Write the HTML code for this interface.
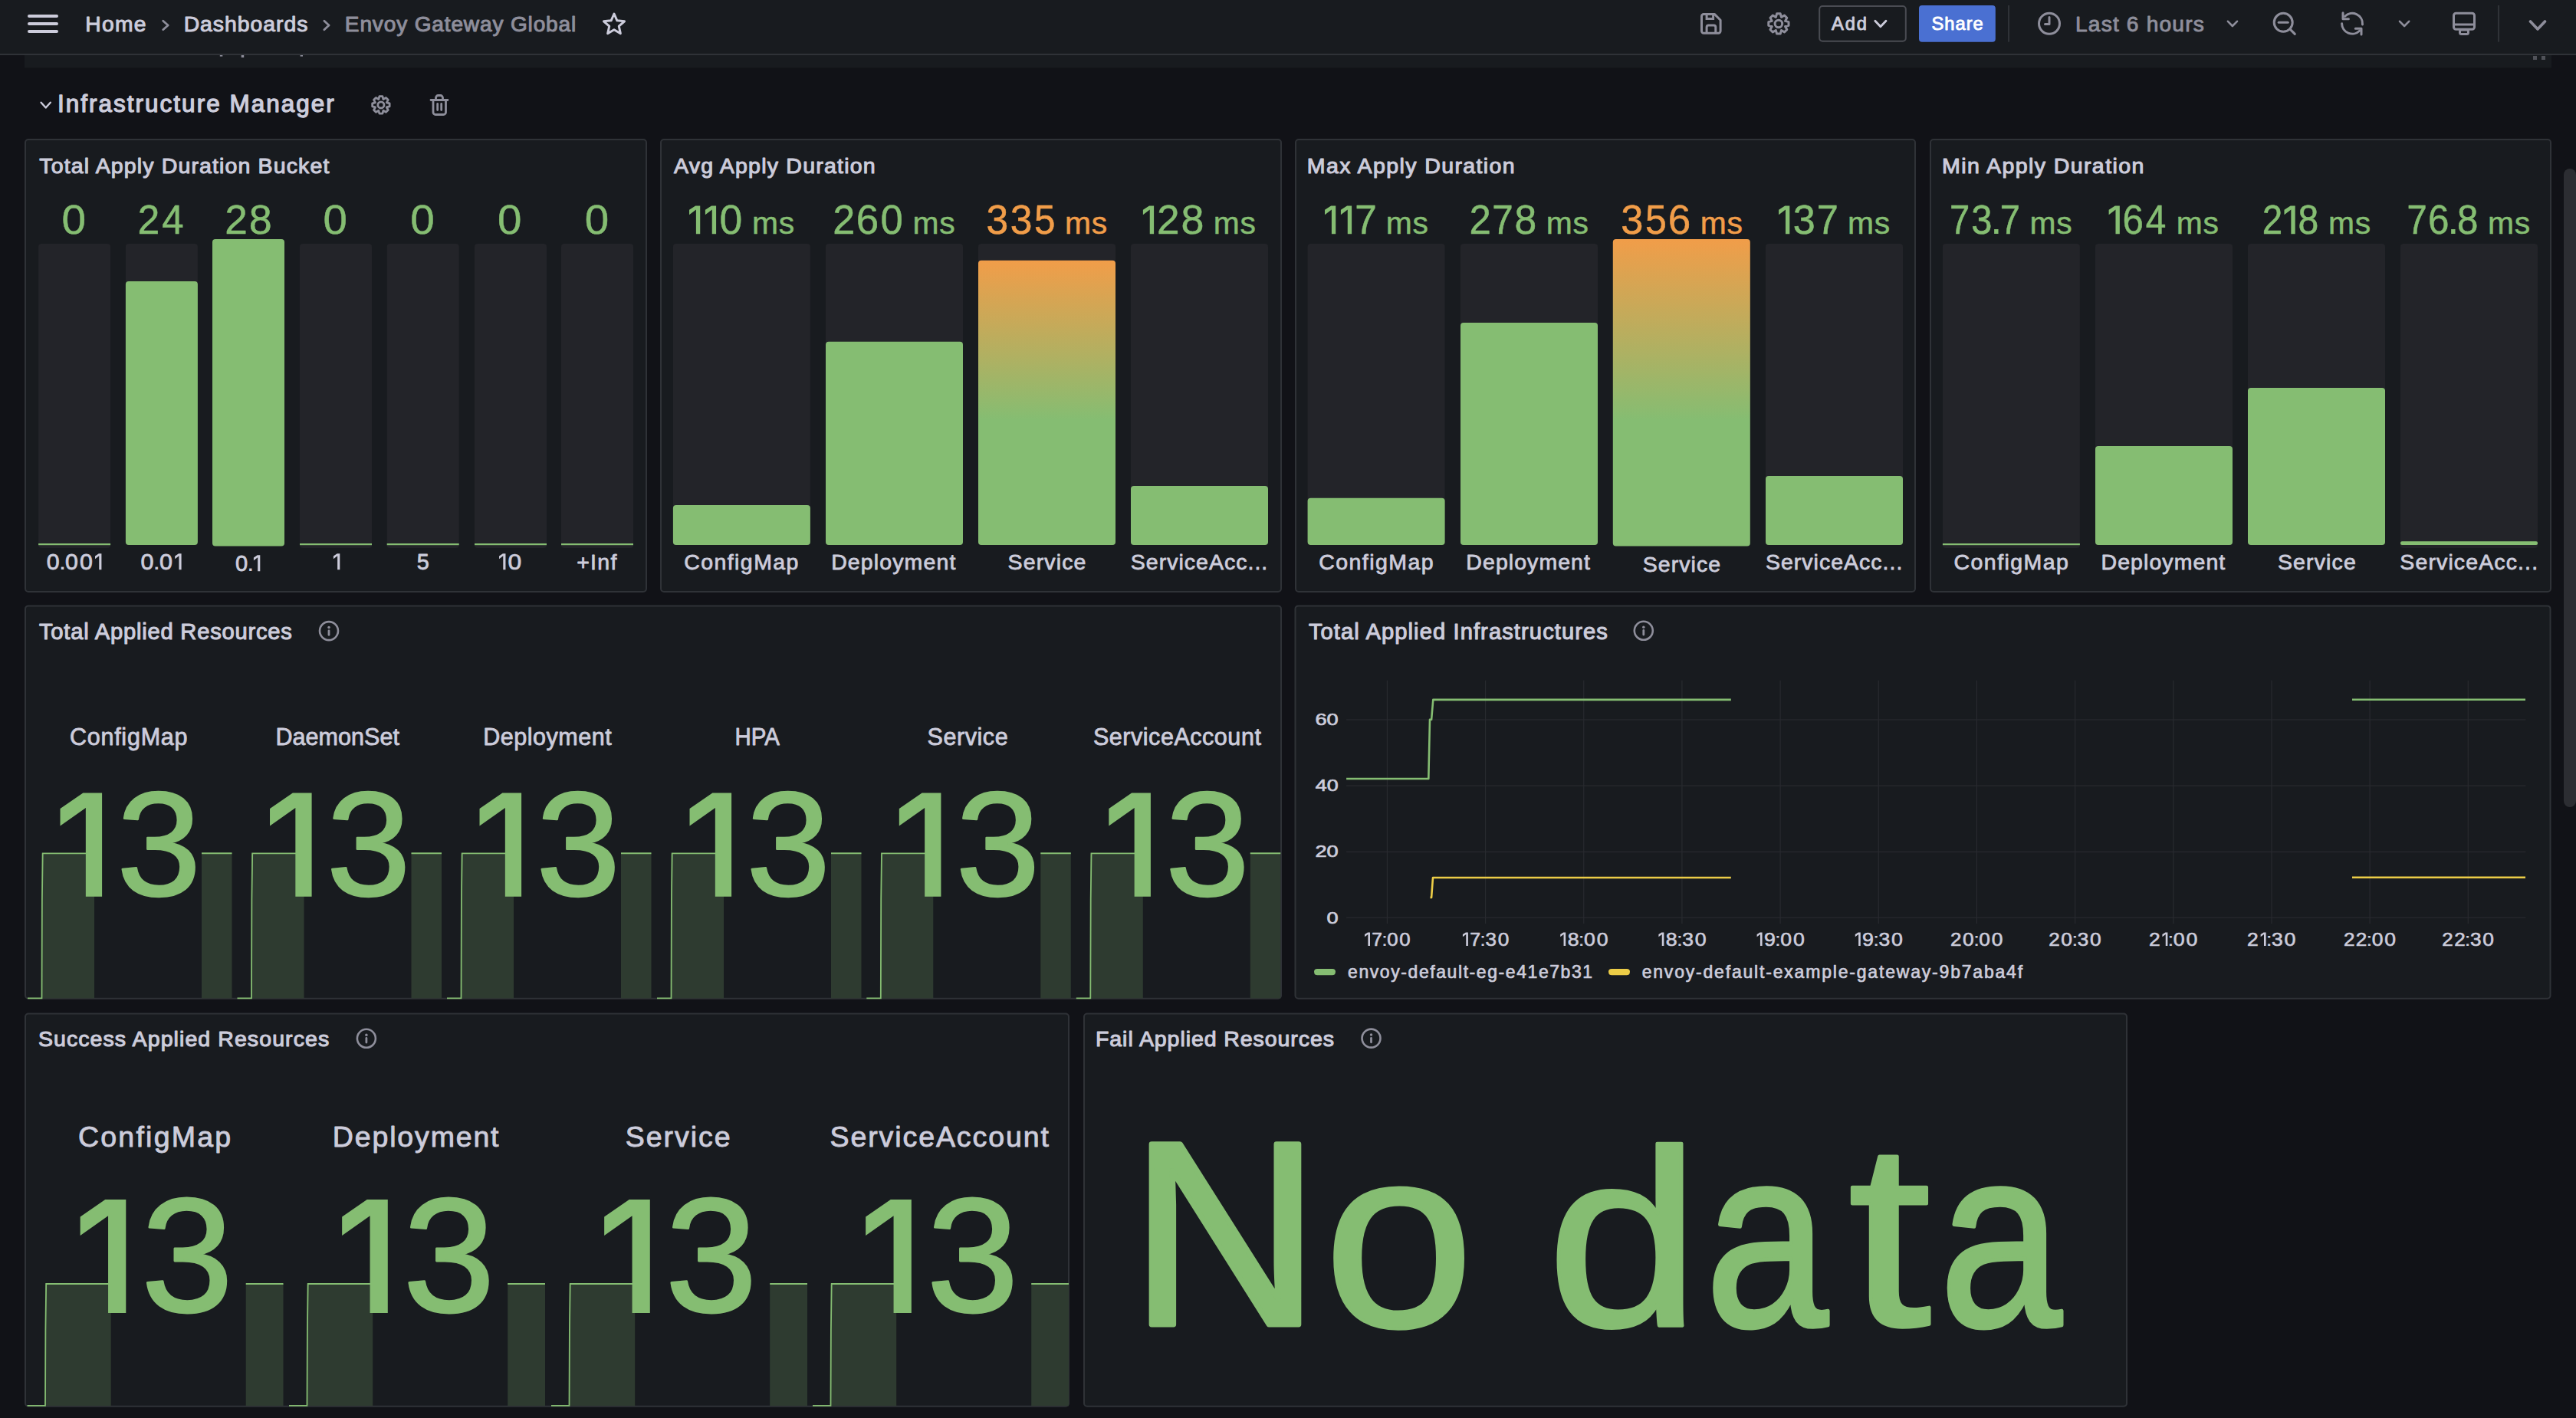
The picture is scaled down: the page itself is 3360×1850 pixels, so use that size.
<!DOCTYPE html>
<html><head><meta charset="utf-8"><title>Envoy Gateway Global - Grafana</title>
<style>html,body{margin:0;padding:0;background:#111217;overflow:hidden;width:3360px;height:1850px}svg{display:block}text{font-family:"Liberation Sans", sans-serif;white-space:pre}</style>
</head><body>
<svg width="3360" height="1850" viewBox="0 0 3360 1850">
<rect x="0" y="0" width="3360" height="1850" fill="#111217"/>
<rect x="32.00" y="60.00" width="3296.00" height="28.50" rx="0" fill="#181b1f"/>
<rect x="286.80" y="72.00" width="3.50" height="1.60" rx="0" fill="#8e8e9b"/>
<rect x="314.70" y="72.00" width="3.50" height="3.00" rx="0" fill="#8e8e9b"/>
<rect x="391.60" y="72.00" width="3.40" height="1.60" rx="0" fill="#8e8e9b"/>
<rect x="3304.00" y="73.00" width="5.00" height="5.00" rx="0" fill="#505259"/>
<rect x="3315.00" y="73.00" width="5.00" height="5.00" rx="0" fill="#505259"/>
<rect x="0.00" y="0.00" width="3360.00" height="70.00" rx="0" fill="#181b1f"/>
<rect x="0.00" y="70.00" width="3360.00" height="2.00" rx="0" fill="#2f3237"/>
<rect x="36.00" y="19.00" width="40.00" height="4.00" rx="2" fill="#ccccdb"/>
<rect x="36.00" y="29.00" width="40.00" height="4.00" rx="2" fill="#ccccdb"/>
<rect x="36.00" y="39.00" width="40.00" height="4.00" rx="2" fill="#ccccdb"/>
<text x="111.25" y="41.20" font-size="28.22" letter-spacing="1.333" fill="#ccccdb" stroke="#ccccdb" stroke-width="1.0" stroke-linejoin="round">Home</text>
<polyline points="212.7,27.2 219.2,33.0 212.7,38.7" fill="none" stroke="#8e8e9b" stroke-width="2.8" stroke-linecap="round" stroke-linejoin="round"/>
<text x="239.65" y="41.30" font-size="28.36" letter-spacing="0.972" fill="#ccccdb" stroke="#ccccdb" stroke-width="1.0" stroke-linejoin="round">Dashboards</text>
<polyline points="422.9,27.2 429.1,33.0 422.9,38.7" fill="none" stroke="#8e8e9b" stroke-width="2.8" stroke-linecap="round" stroke-linejoin="round"/>
<text x="449.85" y="41.20" font-size="28.07" letter-spacing="0.837" fill="#8e8e9b" stroke="#8e8e9b" stroke-width="1.0" stroke-linejoin="round">Envoy Gateway Global</text>
<polygon points="801.00,18.00 804.88,26.86 814.51,27.81 807.28,34.24 809.35,43.69 801.00,38.80 792.65,43.69 794.72,34.24 787.49,27.81 797.12,26.86" fill="none" stroke="#ccccdb" stroke-width="3" stroke-linejoin="round"/>
<path d="M2221.5,18.6 H2236.5 L2244.1,26.2 V40.6 a2.7,2.7 0 0 1 -2.7,2.7 H2222.2 a2.7,2.7 0 0 1 -2.7,-2.7 V21.3 a2.7,2.7 0 0 1 2.7,-2.7 Z" fill="none" stroke="#8e8e9b" stroke-width="3" stroke-linejoin="round"/>
<path d="M2226.1,18.6 V24.6 H2234.6 V18.6" fill="none" stroke="#8e8e9b" stroke-width="3"/>
<path d="M2226.1,43.3 V35.6 a2.5,2.5 0 0 1 2.5,-2.5 H2235.3 a2.5,2.5 0 0 1 2.5,2.5 V43.3" fill="none" stroke="#8e8e9b" stroke-width="3"/>
<polygon points="2317.59,17.85 2322.21,17.85 2323.46,22.35 2327.53,20.06 2330.79,23.32 2328.50,27.39 2333.00,28.64 2333.00,33.26 2328.50,34.51 2330.79,38.58 2327.53,41.84 2323.46,39.55 2322.21,44.05 2317.59,44.05 2316.34,39.55 2312.27,41.84 2309.01,38.58 2311.30,34.51 2306.80,33.26 2306.80,28.64 2311.30,27.39 2309.01,23.32 2312.27,20.06 2316.34,22.35" fill="none" stroke="#8e8e9b" stroke-width="3" stroke-linejoin="round"/>
<circle cx="2319.9" cy="30.95" r="4.79" fill="none" stroke="#8e8e9b" stroke-width="3"/>
<rect x="2373.2" y="8" width="112.6" height="45.7" rx="4" fill="none" stroke="#4a4c53" stroke-width="2"/>
<text x="2388.95" y="39.10" font-size="23.69" letter-spacing="1.925" fill="#ccccdb" stroke="#ccccdb" stroke-width="0.9" stroke-linejoin="round">Add</text>
<polyline points="2445.8,27.2 2452.9,34.8 2460.0,27.2" fill="none" stroke="#ccccdb" stroke-width="2.8" stroke-linecap="round" stroke-linejoin="round"/>
<rect x="2503.00" y="7.00" width="99.80" height="47.70" rx="4" fill="#4a70d2"/>
<text x="2519.45" y="39.10" font-size="23.69" letter-spacing="1.025" fill="#ffffff" stroke="#ffffff" stroke-width="0.9" stroke-linejoin="round">Share</text>
<rect x="2619.00" y="7.00" width="2.00" height="47.70" rx="0" fill="#2f3237"/>
<circle cx="2673" cy="30.85" r="13.5" fill="none" stroke="#8e8e9b" stroke-width="3"/>
<polyline points="2673,22.5 2673,31.5 2667.5,31.5" fill="none" stroke="#8e8e9b" stroke-width="3" stroke-linecap="round" stroke-linejoin="round"/>
<text x="2707.00" y="41.30" font-size="28.20" letter-spacing="1.150" fill="#8e8e9b" stroke="#8e8e9b" stroke-width="0.9" stroke-linejoin="round">Last 6 hours</text>
<polyline points="2905.9,27.8 2911.9,34.0 2918.0,27.8" fill="none" stroke="#8e8e9b" stroke-width="2.6" stroke-linecap="round" stroke-linejoin="round"/>
<circle cx="2978.2" cy="29.3" r="12" fill="none" stroke="#8e8e9b" stroke-width="3"/>
<line x1="2986.8" y1="37.9" x2="2993.3" y2="44.4" stroke="#8e8e9b" stroke-width="3" stroke-linecap="round"/>
<line x1="2972.2" y1="29.3" x2="2984.2" y2="29.3" stroke="#8e8e9b" stroke-width="3" stroke-linecap="round"/>
<path d="M3058.6,21.2 A13.5,13.5 0 0 1 3081.5,31.9" fill="none" stroke="#8e8e9b" stroke-width="3" stroke-linecap="round"/>
<path d="M3054.6,30.7 A13.5,13.5 0 0 0 3077.6,40.2" fill="none" stroke="#8e8e9b" stroke-width="3" stroke-linecap="round"/>
<polyline points="3056,16.8 3056,24.8 3063.4,24.8" fill="none" stroke="#8e8e9b" stroke-width="3" stroke-linecap="round" stroke-linejoin="round"/>
<polyline points="3072.3,37.2 3080,37.2 3080,45" fill="none" stroke="#8e8e9b" stroke-width="3" stroke-linecap="round" stroke-linejoin="round"/>
<polyline points="3130.0,27.8 3136.1,34.0 3142.2,27.8" fill="none" stroke="#8e8e9b" stroke-width="2.6" stroke-linecap="round" stroke-linejoin="round"/>
<rect x="3200.5" y="17.3" width="27" height="21" rx="3" fill="none" stroke="#8e8e9b" stroke-width="3"/>
<line x1="3200.5" y1="32" x2="3227.5" y2="32" stroke="#8e8e9b" stroke-width="3"/>
<rect x="3208.5" y="39" width="11" height="5.5" rx="2" fill="none" stroke="#8e8e9b" stroke-width="3"/>
<rect x="3258.00" y="7.00" width="2.00" height="47.70" rx="0" fill="#2f3237"/>
<polyline points="3300.5,28.0 3310.0,38.0 3319.5,28.0" fill="none" stroke="#8e8e9b" stroke-width="3.6" stroke-linecap="round" stroke-linejoin="round"/>
<polyline points="53.6,133.7 59.7,140.5 65.8,133.7" fill="none" stroke="#ccccdb" stroke-width="2.4" stroke-linecap="round" stroke-linejoin="round"/>
<text x="74.95" y="146.20" font-size="31.46" letter-spacing="2.031" fill="#ccccdb" stroke="#ccccdb" stroke-width="1.3" stroke-linejoin="round">Infrastructure Manager</text>
<polygon points="494.92,125.67 498.88,125.67 499.95,129.53 503.44,127.56 506.24,130.36 504.27,133.85 508.13,134.92 508.13,138.88 504.27,139.95 506.24,143.44 503.44,146.24 499.95,144.27 498.88,148.13 494.92,148.13 493.85,144.27 490.36,146.24 487.56,143.44 489.53,139.95 485.67,138.88 485.67,134.92 489.53,133.85 487.56,130.36 490.36,127.56 493.85,129.53" fill="none" stroke="#8e8e9b" stroke-width="2.8" stroke-linejoin="round"/>
<circle cx="496.9" cy="136.9" r="4.10" fill="none" stroke="#8e8e9b" stroke-width="2.8"/>
<path d="M562,130.5 H584 M568.5,130.5 V127.5 a3,3 0 0 1 3,-3 H574.5 a3,3 0 0 1 3,3 V130.5 M565,130.5 V146.5 a3,3 0 0 0 3,3 H578.5 a3,3 0 0 0 3,-3 V130.5 M570.7,135.5 V143.5 M575.7,135.5 V143.5" fill="none" stroke="#8e8e9b" stroke-width="2.8" stroke-linecap="round" stroke-linejoin="round"/>
<rect x="3344.00" y="220.00" width="16.00" height="833.00" rx="8" fill="#2c2d32"/>
<rect x="33.00" y="182.00" width="810.00" height="590.00" rx="4" fill="#181b1f" stroke="#2f3237" stroke-width="2"/>
<rect x="862.00" y="182.00" width="809.00" height="590.00" rx="4" fill="#181b1f" stroke="#2f3237" stroke-width="2"/>
<rect x="1690.00" y="182.00" width="808.00" height="590.00" rx="4" fill="#181b1f" stroke="#2f3237" stroke-width="2"/>
<rect x="2518.00" y="182.00" width="809.00" height="590.00" rx="4" fill="#181b1f" stroke="#2f3237" stroke-width="2"/>
<text x="51.25" y="226.20" font-size="28.52" letter-spacing="1.133" fill="#ccccdb" stroke="#ccccdb" stroke-width="1.1" stroke-linejoin="round">Total Apply Duration Bucket</text>
<text x="878.95" y="226.20" font-size="28.52" letter-spacing="1.218" fill="#ccccdb" stroke="#ccccdb" stroke-width="1.1" stroke-linejoin="round">Avg Apply Duration</text>
<text x="1704.80" y="226.20" font-size="28.52" letter-spacing="1.388" fill="#ccccdb" stroke="#ccccdb" stroke-width="1.1" stroke-linejoin="round">Max Apply Duration</text>
<text x="2533.10" y="226.20" font-size="28.52" letter-spacing="1.406" fill="#ccccdb" stroke="#ccccdb" stroke-width="1.1" stroke-linejoin="round">Min Apply Duration</text>
<defs><linearGradient id="g1" gradientUnits="userSpaceOnUse" x1="0" y1="340" x2="0" y2="711"><stop offset="0" stop-color="#f19d49"/><stop offset="0.56" stop-color="#85bd72"/><stop offset="1" stop-color="#85bd72"/></linearGradient><linearGradient id="g2" gradientUnits="userSpaceOnUse" x1="0" y1="312" x2="0" y2="712.6"><stop offset="0" stop-color="#f19d49"/><stop offset="0.59" stop-color="#85bd72"/><stop offset="1" stop-color="#85bd72"/></linearGradient></defs>
<rect x="50.10" y="318.00" width="94.00" height="397.00" rx="4" fill="#232429"/>
<rect x="50.10" y="709.00" width="94.00" height="2.20" rx="0" fill="#85bd72"/>
<text transform="translate(80.58,305.16) scale(0.5675,0.5282)" x="0" y="0" font-size="100.0" fill="#85bd72" stroke="#85bd72" stroke-width="0.881" stroke-linejoin="round">0</text>
<text transform="translate(60.69,742.91) scale(0.3031,0.2941)" x="0" y="0" font-size="100.0" fill="#ccccdb" stroke="#ccccdb" stroke-width="2.640" stroke-linejoin="round">0</text>
<text transform="translate(76.38,743.30) scale(0.3580,0.3126)" x="0" y="0" font-size="100.0" fill="#ccccdb">.</text>
<text transform="translate(85.12,742.91) scale(0.3031,0.2941)" x="0" y="0" font-size="100.0" fill="#ccccdb" stroke="#ccccdb" stroke-width="2.640" stroke-linejoin="round">0</text>
<text transform="translate(104.10,742.91) scale(0.3031,0.2941)" x="0" y="0" font-size="100.0" fill="#ccccdb" stroke="#ccccdb" stroke-width="2.640" stroke-linejoin="round">0</text>
<polygon points="128.83,722.30 132.40,722.30 132.40,743.30 129.25,743.30 129.25,725.34 124.00,729.23 124.00,725.45" fill="#ccccdb"/>
<rect x="163.90" y="318.00" width="94.00" height="393.00" rx="4" fill="#232429"/>
<rect x="163.90" y="366.90" width="94.00" height="344.10" rx="4" fill="#85bd72"/>
<text transform="translate(179.56,305.15) scale(0.5178,0.5281)" x="0" y="0" font-size="100.0" fill="#85bd72" stroke="#85bd72" stroke-width="0.966" stroke-linejoin="round">2</text>
<text transform="translate(211.26,305.15) scale(0.5098,0.5280)" x="0" y="0" font-size="100.0" fill="#85bd72" stroke="#85bd72" stroke-width="0.981" stroke-linejoin="round">4</text>
<text transform="translate(183.48,742.91) scale(0.3054,0.2941)" x="0" y="0" font-size="100.0" fill="#ccccdb" stroke="#ccccdb" stroke-width="2.620" stroke-linejoin="round">0</text>
<text transform="translate(199.29,743.30) scale(0.3606,0.3126)" x="0" y="0" font-size="100.0" fill="#ccccdb">.</text>
<text transform="translate(208.09,742.91) scale(0.3054,0.2941)" x="0" y="0" font-size="100.0" fill="#ccccdb" stroke="#ccccdb" stroke-width="2.620" stroke-linejoin="round">0</text>
<polygon points="233.03,722.30 236.60,722.30 236.60,743.30 233.45,743.30 233.45,725.34 228.20,729.23 228.20,725.45" fill="#ccccdb"/>
<rect x="277.00" y="312.00" width="94.00" height="400.60" rx="4" fill="#85bd72"/>
<text transform="translate(293.29,305.15) scale(0.5320,0.5281)" x="0" y="0" font-size="100.0" fill="#85bd72" stroke="#85bd72" stroke-width="0.940" stroke-linejoin="round">2</text>
<text transform="translate(324.73,305.16) scale(0.5389,0.5282)" x="0" y="0" font-size="100.0" fill="#85bd72" stroke="#85bd72" stroke-width="0.928" stroke-linejoin="round">8</text>
<text transform="translate(306.94,744.91) scale(0.2900,0.2941)" x="0" y="0" font-size="100.0" fill="#ccccdb" stroke="#ccccdb" stroke-width="2.758" stroke-linejoin="round">0</text>
<text transform="translate(321.98,745.30) scale(0.3434,0.3126)" x="0" y="0" font-size="100.0" fill="#ccccdb">.</text>
<polygon points="335.73,724.30 339.30,724.30 339.30,745.30 336.15,745.30 336.15,727.34 330.90,731.23 330.90,727.45" fill="#ccccdb"/>
<rect x="391.00" y="318.00" width="94.00" height="397.00" rx="4" fill="#232429"/>
<rect x="391.00" y="709.00" width="94.00" height="2.20" rx="0" fill="#85bd72"/>
<text transform="translate(421.49,305.16) scale(0.5654,0.5282)" x="0" y="0" font-size="100.0" fill="#85bd72" stroke="#85bd72" stroke-width="0.884" stroke-linejoin="round">0</text>
<polygon points="439.73,722.30 443.30,722.30 443.30,743.30 440.15,743.30 440.15,725.34 434.90,729.23 434.90,725.45" fill="#ccccdb"/>
<rect x="504.70" y="318.00" width="94.00" height="397.00" rx="4" fill="#232429"/>
<rect x="504.70" y="709.00" width="94.00" height="2.20" rx="0" fill="#85bd72"/>
<text transform="translate(535.18,305.16) scale(0.5675,0.5282)" x="0" y="0" font-size="100.0" fill="#85bd72" stroke="#85bd72" stroke-width="0.881" stroke-linejoin="round">0</text>
<text transform="translate(543.65,742.91) scale(0.2884,0.2940)" x="0" y="0" font-size="100.0" fill="#ccccdb" stroke="#ccccdb" stroke-width="2.774" stroke-linejoin="round">5</text>
<rect x="619.00" y="318.00" width="94.00" height="397.00" rx="4" fill="#232429"/>
<rect x="619.00" y="709.00" width="94.00" height="2.20" rx="0" fill="#85bd72"/>
<text transform="translate(648.99,305.16) scale(0.5654,0.5282)" x="0" y="0" font-size="100.0" fill="#85bd72" stroke="#85bd72" stroke-width="0.884" stroke-linejoin="round">0</text>
<polygon points="655.88,722.30 659.45,722.30 659.45,743.30 656.30,743.30 656.30,725.34 651.05,729.23 651.05,725.45" fill="#ccccdb"/>
<text transform="translate(662.47,742.91) scale(0.3195,0.2941)" x="0" y="0" font-size="100.0" fill="#ccccdb" stroke="#ccccdb" stroke-width="2.504" stroke-linejoin="round">0</text>
<rect x="732.00" y="318.00" width="94.00" height="397.00" rx="4" fill="#232429"/>
<rect x="732.00" y="709.00" width="94.00" height="2.20" rx="0" fill="#85bd72"/>
<text transform="translate(762.79,305.16) scale(0.5654,0.5282)" x="0" y="0" font-size="100.0" fill="#85bd72" stroke="#85bd72" stroke-width="0.884" stroke-linejoin="round">0</text>
<text x="752.15" y="743.30" font-size="28.48" letter-spacing="1.317" fill="#ccccdb" stroke="#ccccdb" stroke-width="0.8" stroke-linejoin="round">+Inf</text>
<rect x="877.90" y="318.00" width="179.00" height="393.00" rx="4" fill="#232429"/>
<rect x="877.90" y="659.00" width="179.00" height="52.00" rx="4" fill="#85bd72"/>
<rect x="1077.00" y="318.00" width="179.00" height="393.00" rx="4" fill="#232429"/>
<rect x="1077.00" y="445.80" width="179.00" height="265.20" rx="4" fill="#85bd72"/>
<rect x="1276.00" y="318.00" width="179.00" height="393.00" rx="4" fill="#232429"/>
<rect x="1276.00" y="339.70" width="179.00" height="371.30" rx="4" fill="url(#g1)"/>
<rect x="1475.00" y="318.00" width="179.00" height="393.00" rx="4" fill="#232429"/>
<rect x="1475.00" y="634.00" width="179.00" height="77.00" rx="4" fill="#85bd72"/>
<polygon points="907.16,268.40 913.23,268.40 913.23,305.20 907.89,305.20 907.89,273.55 899.02,280.18 899.02,273.66" fill="#85bd72"/>
<polygon points="928.02,268.40 934.09,268.40 934.09,305.20 928.75,305.20 928.75,273.55 919.89,280.18 919.89,273.66" fill="#85bd72"/>
<text transform="translate(938.53,304.96) scale(0.5356,0.5282)" x="0" y="0" font-size="100.0" fill="#85bd72" stroke="#85bd72" stroke-width="0.933" stroke-linejoin="round">0</text>
<text x="981.00" y="305.20" font-size="40.85" letter-spacing="0.750" fill="#85bd72" stroke="#85bd72" stroke-width="0.5" stroke-linejoin="round">ms</text>
<text transform="translate(1086.34,304.95) scale(0.5211,0.5281)" x="0" y="0" font-size="100.0" fill="#85bd72" stroke="#85bd72" stroke-width="0.960" stroke-linejoin="round">2</text>
<text transform="translate(1116.75,304.96) scale(0.5285,0.5282)" x="0" y="0" font-size="100.0" fill="#85bd72" stroke="#85bd72" stroke-width="0.946" stroke-linejoin="round">6</text>
<text transform="translate(1148.46,304.96) scale(0.5273,0.5282)" x="0" y="0" font-size="100.0" fill="#85bd72" stroke="#85bd72" stroke-width="0.948" stroke-linejoin="round">0</text>
<text x="1190.50" y="305.20" font-size="40.85" letter-spacing="0.750" fill="#85bd72" stroke="#85bd72" stroke-width="0.5" stroke-linejoin="round">ms</text>
<text transform="translate(1286.61,304.96) scale(0.5162,0.5282)" x="0" y="0" font-size="100.0" fill="#f19d49" stroke="#f19d49" stroke-width="0.969" stroke-linejoin="round">3</text>
<text transform="translate(1317.80,304.96) scale(0.5162,0.5282)" x="0" y="0" font-size="100.0" fill="#f19d49" stroke="#f19d49" stroke-width="0.969" stroke-linejoin="round">3</text>
<text transform="translate(1348.94,304.96) scale(0.4933,0.5281)" x="0" y="0" font-size="100.0" fill="#f19d49" stroke="#f19d49" stroke-width="1.014" stroke-linejoin="round">5</text>
<text x="1389.10" y="305.20" font-size="40.85" letter-spacing="0.750" fill="#f19d49" stroke="#f19d49" stroke-width="0.5" stroke-linejoin="round">ms</text>
<polygon points="1499.02,268.40 1505.09,268.40 1505.09,305.20 1499.75,305.20 1499.75,273.55 1490.88,280.18 1490.88,273.66" fill="#85bd72"/>
<text transform="translate(1509.04,304.95) scale(0.5316,0.5281)" x="0" y="0" font-size="100.0" fill="#85bd72" stroke="#85bd72" stroke-width="0.941" stroke-linejoin="round">2</text>
<text transform="translate(1540.45,304.96) scale(0.5385,0.5282)" x="0" y="0" font-size="100.0" fill="#85bd72" stroke="#85bd72" stroke-width="0.929" stroke-linejoin="round">8</text>
<text x="1582.80" y="305.20" font-size="40.85" letter-spacing="0.750" fill="#85bd72" stroke="#85bd72" stroke-width="0.5" stroke-linejoin="round">ms</text>
<text x="892.20" y="743.40" font-size="28.48" letter-spacing="1.444" fill="#ccccdb" stroke="#ccccdb" stroke-width="0.8" stroke-linejoin="round">ConfigMap</text>
<text x="1084.15" y="743.40" font-size="28.48" letter-spacing="1.139" fill="#ccccdb" stroke="#ccccdb" stroke-width="0.8" stroke-linejoin="round">Deployment</text>
<text x="1314.55" y="743.40" font-size="28.48" letter-spacing="1.150" fill="#ccccdb" stroke="#ccccdb" stroke-width="0.8" stroke-linejoin="round">Service</text>
<text x="1474.75" y="743.40" font-size="28.48" letter-spacing="1.033" fill="#ccccdb" stroke="#ccccdb" stroke-width="0.8" stroke-linejoin="round">ServiceAcc...</text>
<rect x="1705.60" y="318.00" width="179.00" height="393.00" rx="4" fill="#232429"/>
<rect x="1705.60" y="649.80" width="179.00" height="61.20" rx="4" fill="#85bd72"/>
<rect x="1905.00" y="318.00" width="179.00" height="393.00" rx="4" fill="#232429"/>
<rect x="1905.00" y="421.00" width="179.00" height="290.00" rx="4" fill="#85bd72"/>
<rect x="2103.80" y="312" width="179" height="400.60" rx="4" fill="url(#g2)"/>
<rect x="2303.00" y="318.00" width="179.00" height="393.00" rx="4" fill="#232429"/>
<rect x="2303.00" y="621.00" width="179.00" height="90.00" rx="4" fill="#85bd72"/>
<polygon points="1736.16,268.40 1742.24,268.40 1742.24,305.20 1736.90,305.20 1736.90,273.55 1728.03,280.18 1728.03,273.66" fill="#85bd72"/>
<polygon points="1757.04,268.40 1763.11,268.40 1763.11,305.20 1757.77,305.20 1757.77,273.55 1748.90,280.18 1748.90,273.66" fill="#85bd72"/>
<text transform="translate(1767.13,304.95) scale(0.5133,0.5280)" x="0" y="0" font-size="100.0" fill="#85bd72" stroke="#85bd72" stroke-width="0.974" stroke-linejoin="round">7</text>
<text x="1807.80" y="305.20" font-size="40.85" letter-spacing="0.750" fill="#85bd72" stroke="#85bd72" stroke-width="0.5" stroke-linejoin="round">ms</text>
<text transform="translate(1916.40,304.95) scale(0.5095,0.5281)" x="0" y="0" font-size="100.0" fill="#85bd72" stroke="#85bd72" stroke-width="0.981" stroke-linejoin="round">2</text>
<text transform="translate(1946.26,304.95) scale(0.4937,0.5280)" x="0" y="0" font-size="100.0" fill="#85bd72" stroke="#85bd72" stroke-width="1.013" stroke-linejoin="round">7</text>
<text transform="translate(1975.60,304.96) scale(0.5161,0.5282)" x="0" y="0" font-size="100.0" fill="#85bd72" stroke="#85bd72" stroke-width="0.969" stroke-linejoin="round">8</text>
<text x="2016.80" y="305.20" font-size="40.85" letter-spacing="0.750" fill="#85bd72" stroke="#85bd72" stroke-width="0.5" stroke-linejoin="round">ms</text>
<text transform="translate(2114.29,304.96) scale(0.5239,0.5282)" x="0" y="0" font-size="100.0" fill="#f19d49" stroke="#f19d49" stroke-width="0.954" stroke-linejoin="round">3</text>
<text transform="translate(2145.89,304.96) scale(0.5007,0.5281)" x="0" y="0" font-size="100.0" fill="#f19d49" stroke="#f19d49" stroke-width="0.999" stroke-linejoin="round">5</text>
<text transform="translate(2175.78,304.96) scale(0.5301,0.5282)" x="0" y="0" font-size="100.0" fill="#f19d49" stroke="#f19d49" stroke-width="0.943" stroke-linejoin="round">6</text>
<text x="2217.70" y="305.20" font-size="40.85" letter-spacing="0.750" fill="#f19d49" stroke="#f19d49" stroke-width="0.5" stroke-linejoin="round">ms</text>
<polygon points="2328.22,268.40 2334.29,268.40 2334.29,305.20 2328.96,305.20 2328.96,273.55 2320.09,280.18 2320.09,273.66" fill="#85bd72"/>
<text transform="translate(2338.82,304.96) scale(0.5219,0.5282)" x="0" y="0" font-size="100.0" fill="#85bd72" stroke="#85bd72" stroke-width="0.958" stroke-linejoin="round">3</text>
<text transform="translate(2369.77,304.95) scale(0.5045,0.5280)" x="0" y="0" font-size="100.0" fill="#85bd72" stroke="#85bd72" stroke-width="0.991" stroke-linejoin="round">7</text>
<text x="2410.00" y="305.20" font-size="40.85" letter-spacing="0.750" fill="#85bd72" stroke="#85bd72" stroke-width="0.5" stroke-linejoin="round">ms</text>
<text x="1720.30" y="743.40" font-size="28.48" letter-spacing="1.444" fill="#ccccdb" stroke="#ccccdb" stroke-width="0.8" stroke-linejoin="round">ConfigMap</text>
<text x="1912.35" y="743.40" font-size="28.48" letter-spacing="1.072" fill="#ccccdb" stroke="#ccccdb" stroke-width="0.8" stroke-linejoin="round">Deployment</text>
<text x="2142.65" y="745.50" font-size="28.48" letter-spacing="1.083" fill="#ccccdb" stroke="#ccccdb" stroke-width="0.8" stroke-linejoin="round">Service</text>
<text x="2302.95" y="743.40" font-size="28.48" letter-spacing="1.025" fill="#ccccdb" stroke="#ccccdb" stroke-width="0.8" stroke-linejoin="round">ServiceAcc...</text>
<rect x="2533.90" y="318.00" width="179.00" height="397.00" rx="4" fill="#232429"/>
<rect x="2533.90" y="709.00" width="179.00" height="2.20" rx="0" fill="#85bd72"/>
<rect x="2733.00" y="318.00" width="179.00" height="393.00" rx="4" fill="#232429"/>
<rect x="2733.00" y="582.00" width="179.00" height="129.00" rx="4" fill="#85bd72"/>
<rect x="2932.00" y="318.00" width="179.00" height="393.00" rx="4" fill="#232429"/>
<rect x="2932.00" y="506.00" width="179.00" height="205.00" rx="4" fill="#85bd72"/>
<rect x="3131.00" y="318.00" width="179.00" height="397.00" rx="4" fill="#232429"/>
<rect x="3131.00" y="706.30" width="179.00" height="4.70" rx="2" fill="#85bd72"/>
<text transform="translate(2542.89,304.95) scale(0.4720,0.5280)" x="0" y="0" font-size="100.0" fill="#85bd72" stroke="#85bd72" stroke-width="1.059" stroke-linejoin="round">7</text>
<text transform="translate(2571.23,304.96) scale(0.4882,0.5282)" x="0" y="0" font-size="100.0" fill="#85bd72" stroke="#85bd72" stroke-width="1.024" stroke-linejoin="round">3</text>
<text transform="translate(2595.90,305.20) scale(0.5635,0.5477)" x="0" y="0" font-size="100.0" fill="#85bd72">.</text>
<text transform="translate(2608.82,304.95) scale(0.4720,0.5280)" x="0" y="0" font-size="100.0" fill="#85bd72" stroke="#85bd72" stroke-width="1.059" stroke-linejoin="round">7</text>
<text x="2647.40" y="305.20" font-size="40.85" letter-spacing="0.750" fill="#85bd72" stroke="#85bd72" stroke-width="0.5" stroke-linejoin="round">ms</text>
<polygon points="2758.76,268.40 2764.83,268.40 2764.83,305.20 2759.49,305.20 2759.49,273.55 2750.62,280.18 2750.62,273.66" fill="#85bd72"/>
<text transform="translate(2768.43,304.96) scale(0.4917,0.5282)" x="0" y="0" font-size="100.0" fill="#85bd72" stroke="#85bd72" stroke-width="1.017" stroke-linejoin="round">6</text>
<text transform="translate(2798.87,304.95) scale(0.4774,0.5280)" x="0" y="0" font-size="100.0" fill="#85bd72" stroke="#85bd72" stroke-width="1.047" stroke-linejoin="round">4</text>
<text x="2838.80" y="305.20" font-size="40.85" letter-spacing="0.750" fill="#85bd72" stroke="#85bd72" stroke-width="0.5" stroke-linejoin="round">ms</text>
<text transform="translate(2950.67,304.95) scale(0.4751,0.5281)" x="0" y="0" font-size="100.0" fill="#85bd72" stroke="#85bd72" stroke-width="1.052" stroke-linejoin="round">2</text>
<polygon points="2987.61,268.40 2993.68,268.40 2993.68,305.20 2988.35,305.20 2988.35,273.55 2979.48,280.18 2979.48,273.66" fill="#85bd72"/>
<text transform="translate(2997.58,304.96) scale(0.4813,0.5282)" x="0" y="0" font-size="100.0" fill="#85bd72" stroke="#85bd72" stroke-width="1.039" stroke-linejoin="round">8</text>
<text x="3037.00" y="305.20" font-size="40.85" letter-spacing="0.750" fill="#85bd72" stroke="#85bd72" stroke-width="0.5" stroke-linejoin="round">ms</text>
<text transform="translate(3139.39,304.95) scale(0.4710,0.5280)" x="0" y="0" font-size="100.0" fill="#85bd72" stroke="#85bd72" stroke-width="1.061" stroke-linejoin="round">7</text>
<text transform="translate(3167.04,304.96) scale(0.4930,0.5282)" x="0" y="0" font-size="100.0" fill="#85bd72" stroke="#85bd72" stroke-width="1.014" stroke-linejoin="round">6</text>
<text transform="translate(3191.95,305.20) scale(0.5624,0.5477)" x="0" y="0" font-size="100.0" fill="#85bd72">.</text>
<text transform="translate(3205.11,304.96) scale(0.4925,0.5282)" x="0" y="0" font-size="100.0" fill="#85bd72" stroke="#85bd72" stroke-width="1.015" stroke-linejoin="round">8</text>
<text x="3245.10" y="305.20" font-size="40.85" letter-spacing="0.750" fill="#85bd72" stroke="#85bd72" stroke-width="0.5" stroke-linejoin="round">ms</text>
<text x="2548.60" y="743.40" font-size="28.48" letter-spacing="1.444" fill="#ccccdb" stroke="#ccccdb" stroke-width="0.8" stroke-linejoin="round">ConfigMap</text>
<text x="2740.55" y="743.40" font-size="28.48" letter-spacing="1.083" fill="#ccccdb" stroke="#ccccdb" stroke-width="0.8" stroke-linejoin="round">Deployment</text>
<text x="2970.95" y="743.40" font-size="28.48" letter-spacing="1.150" fill="#ccccdb" stroke="#ccccdb" stroke-width="0.8" stroke-linejoin="round">Service</text>
<text x="3130.35" y="743.40" font-size="28.48" letter-spacing="1.133" fill="#ccccdb" stroke="#ccccdb" stroke-width="0.8" stroke-linejoin="round">ServiceAcc...</text>
<rect x="33.00" y="790.40" width="1638.00" height="512.30" rx="4" fill="#181b1f" stroke="#2f3237" stroke-width="2"/>
<rect x="1689.50" y="790.40" width="1637.00" height="512.30" rx="4" fill="#181b1f" stroke="#2f3237" stroke-width="2"/>
<text x="51.00" y="834.00" font-size="29.11" letter-spacing="0.800" fill="#ccccdb" stroke="#ccccdb" stroke-width="1.1" stroke-linejoin="round">Total Applied Resources</text>
<circle cx="429" cy="823.1" r="12" fill="none" stroke="#8e8e9b" stroke-width="2.6"/>
<line x1="429" y1="822.8000000000001" x2="429" y2="828.3000000000001" stroke="#8e8e9b" stroke-width="2.8" stroke-linecap="round"/>
<circle cx="429" cy="818.5" r="1.75" fill="#8e8e9b"/>
<text x="1706.90" y="834.00" font-size="29.11" letter-spacing="1.100" fill="#ccccdb" stroke="#ccccdb" stroke-width="1.1" stroke-linejoin="round">Total Applied Infrastructures</text>
<circle cx="2143.8" cy="822.8000000000001" r="12" fill="none" stroke="#8e8e9b" stroke-width="2.6"/>
<line x1="2143.8" y1="822.5000000000001" x2="2143.8" y2="828.0000000000001" stroke="#8e8e9b" stroke-width="2.8" stroke-linecap="round"/>
<circle cx="2143.8" cy="818.2" r="1.75" fill="#8e8e9b"/>
<path d="M54.50,1302.60 V1113.30 H123.00 V1302.60 Z" fill="#2e3b30"/>
<path d="M263.00,1302.60 V1113.30 H302.50 V1302.60 Z" fill="#2e3b30"/>
<polyline points="36.00,1302.30 54.50,1302.30 54.90,1173.30 55.70,1113.30 123.00,1113.30" fill="none" stroke="#85bd72" stroke-width="1.8"/>
<line x1="263.00" y1="1113.30" x2="302.50" y2="1113.30" stroke="#85bd72" stroke-width="2"/>
<path d="M328.00,1302.60 V1113.30 H396.50 V1302.60 Z" fill="#2e3b30"/>
<path d="M536.50,1302.60 V1113.30 H576.00 V1302.60 Z" fill="#2e3b30"/>
<polyline points="309.50,1302.30 328.00,1302.30 328.40,1173.30 329.20,1113.30 396.50,1113.30" fill="none" stroke="#85bd72" stroke-width="1.8"/>
<line x1="536.50" y1="1113.30" x2="576.00" y2="1113.30" stroke="#85bd72" stroke-width="2"/>
<path d="M601.50,1302.60 V1113.30 H670.00 V1302.60 Z" fill="#2e3b30"/>
<path d="M810.00,1302.60 V1113.30 H849.50 V1302.60 Z" fill="#2e3b30"/>
<polyline points="583.00,1302.30 601.50,1302.30 601.90,1173.30 602.70,1113.30 670.00,1113.30" fill="none" stroke="#85bd72" stroke-width="1.8"/>
<line x1="810.00" y1="1113.30" x2="849.50" y2="1113.30" stroke="#85bd72" stroke-width="2"/>
<path d="M875.50,1302.60 V1113.30 H944.00 V1302.60 Z" fill="#2e3b30"/>
<path d="M1084.00,1302.60 V1113.30 H1123.50 V1302.60 Z" fill="#2e3b30"/>
<polyline points="857.00,1302.30 875.50,1302.30 875.90,1173.30 876.70,1113.30 944.00,1113.30" fill="none" stroke="#85bd72" stroke-width="1.8"/>
<line x1="1084.00" y1="1113.30" x2="1123.50" y2="1113.30" stroke="#85bd72" stroke-width="2"/>
<path d="M1148.80,1302.60 V1113.30 H1217.30 V1302.60 Z" fill="#2e3b30"/>
<path d="M1357.30,1302.60 V1113.30 H1396.80 V1302.60 Z" fill="#2e3b30"/>
<polyline points="1130.30,1302.30 1148.80,1302.30 1149.20,1173.30 1150.00,1113.30 1217.30,1113.30" fill="none" stroke="#85bd72" stroke-width="1.8"/>
<line x1="1357.30" y1="1113.30" x2="1396.80" y2="1113.30" stroke="#85bd72" stroke-width="2"/>
<path d="M1422.30,1302.60 V1113.30 H1490.80 V1302.60 Z" fill="#2e3b30"/>
<path d="M1630.80,1302.60 V1113.30 H1670.30 V1302.60 Z" fill="#2e3b30"/>
<polyline points="1403.80,1302.30 1422.30,1302.30 1422.70,1173.30 1423.50,1113.30 1490.80,1113.30" fill="none" stroke="#85bd72" stroke-width="1.8"/>
<line x1="1630.80" y1="1113.30" x2="1670.30" y2="1113.30" stroke="#85bd72" stroke-width="2"/>
<text x="90.90" y="971.70" font-size="30.52" letter-spacing="0.756" fill="#ccccdb" stroke="#ccccdb" stroke-width="0.8" stroke-linejoin="round">ConfigMap</text>
<polygon points="108.32,1034.40 133.10,1034.40 133.10,1169.80 111.84,1169.80 111.84,1054.03 78.53,1077.59 78.53,1054.98" fill="#85bd72"/>
<text transform="translate(152.19,1168.37) scale(1.9768,1.9279)" x="0" y="0" font-size="100.0" fill="#85bd72" stroke="#85bd72" stroke-width="1.315" stroke-linejoin="round">3</text>
<text x="359.40" y="971.70" font-size="30.52" letter-spacing="0.056" fill="#ccccdb" stroke="#ccccdb" stroke-width="0.8" stroke-linejoin="round">DaemonSet</text>
<polygon points="381.82,1034.40 406.60,1034.40 406.60,1169.80 385.34,1169.80 385.34,1054.03 352.03,1077.59 352.03,1054.98" fill="#85bd72"/>
<text transform="translate(425.69,1168.37) scale(1.9768,1.9279)" x="0" y="0" font-size="100.0" fill="#85bd72" stroke="#85bd72" stroke-width="1.315" stroke-linejoin="round">3</text>
<text x="630.20" y="971.70" font-size="30.52" letter-spacing="0.533" fill="#ccccdb" stroke="#ccccdb" stroke-width="0.8" stroke-linejoin="round">Deployment</text>
<polygon points="655.32,1034.40 680.10,1034.40 680.10,1169.80 658.84,1169.80 658.84,1054.03 625.53,1077.59 625.53,1054.98" fill="#85bd72"/>
<text transform="translate(699.19,1168.37) scale(1.9768,1.9279)" x="0" y="0" font-size="100.0" fill="#85bd72" stroke="#85bd72" stroke-width="1.315" stroke-linejoin="round">3</text>
<text transform="translate(960.80,971.70) scale(0.9662,1)" x="-2.50" y="0" font-size="30.52" fill="#ccccdb" stroke="#ccccdb" stroke-width="0.8" stroke-linejoin="round">HPA</text>
<polygon points="929.32,1034.40 954.10,1034.40 954.10,1169.80 932.84,1169.80 932.84,1054.03 899.53,1077.59 899.53,1054.98" fill="#85bd72"/>
<text transform="translate(973.19,1168.37) scale(1.9768,1.9279)" x="0" y="0" font-size="100.0" fill="#85bd72" stroke="#85bd72" stroke-width="1.315" stroke-linejoin="round">3</text>
<text x="1209.50" y="971.70" font-size="30.52" letter-spacing="0.567" fill="#ccccdb" stroke="#ccccdb" stroke-width="0.8" stroke-linejoin="round">Service</text>
<polygon points="1202.62,1034.40 1227.40,1034.40 1227.40,1169.80 1206.14,1169.80 1206.14,1054.03 1172.83,1077.59 1172.83,1054.98" fill="#85bd72"/>
<text transform="translate(1246.49,1168.37) scale(1.9768,1.9279)" x="0" y="0" font-size="100.0" fill="#85bd72" stroke="#85bd72" stroke-width="1.315" stroke-linejoin="round">3</text>
<text x="1425.90" y="971.70" font-size="30.52" letter-spacing="0.535" fill="#ccccdb" stroke="#ccccdb" stroke-width="0.8" stroke-linejoin="round">ServiceAccount</text>
<polygon points="1476.12,1034.40 1500.90,1034.40 1500.90,1169.80 1479.64,1169.80 1479.64,1054.03 1446.33,1077.59 1446.33,1054.98" fill="#85bd72"/>
<text transform="translate(1519.99,1168.37) scale(1.9768,1.9279)" x="0" y="0" font-size="100.0" fill="#85bd72" stroke="#85bd72" stroke-width="1.315" stroke-linejoin="round">3</text>
<rect x="1756.10" y="938.40" width="1538.30" height="1.20" rx="0" fill="#282a2f"/>
<rect x="1756.10" y="1024.50" width="1538.30" height="1.20" rx="0" fill="#282a2f"/>
<rect x="1756.10" y="1110.80" width="1538.30" height="1.20" rx="0" fill="#282a2f"/>
<rect x="1756.10" y="1196.70" width="1538.30" height="1.20" rx="0" fill="#282a2f"/>
<rect x="1808.80" y="887.70" width="1.20" height="317.30" rx="0" fill="#282a2f"/>
<rect x="1936.97" y="887.70" width="1.20" height="317.30" rx="0" fill="#282a2f"/>
<rect x="2065.14" y="887.70" width="1.20" height="317.30" rx="0" fill="#282a2f"/>
<rect x="2193.31" y="887.70" width="1.20" height="317.30" rx="0" fill="#282a2f"/>
<rect x="2321.48" y="887.70" width="1.20" height="317.30" rx="0" fill="#282a2f"/>
<rect x="2449.65" y="887.70" width="1.20" height="317.30" rx="0" fill="#282a2f"/>
<rect x="2577.82" y="887.70" width="1.20" height="317.30" rx="0" fill="#282a2f"/>
<rect x="2705.99" y="887.70" width="1.20" height="317.30" rx="0" fill="#282a2f"/>
<rect x="2834.16" y="887.70" width="1.20" height="317.30" rx="0" fill="#282a2f"/>
<rect x="2962.33" y="887.70" width="1.20" height="317.30" rx="0" fill="#282a2f"/>
<rect x="3090.50" y="887.70" width="1.20" height="317.30" rx="0" fill="#282a2f"/>
<rect x="3218.67" y="887.70" width="1.20" height="317.30" rx="0" fill="#282a2f"/>
<text transform="translate(1716.65,946.00) scale(1.2494,1)" x="-1.00" y="0" font-size="21.75" fill="#ccccdb" stroke="#ccccdb" stroke-width="0.7" stroke-linejoin="round">60</text>
<text transform="translate(1716.35,1032.20) scale(1.2352,1)" x="-0.50" y="0" font-size="21.75" fill="#ccccdb" stroke="#ccccdb" stroke-width="0.7" stroke-linejoin="round">40</text>
<text transform="translate(1716.65,1118.40) scale(1.2494,1)" x="-1.00" y="0" font-size="21.75" fill="#ccccdb" stroke="#ccccdb" stroke-width="0.7" stroke-linejoin="round">20</text>
<text transform="translate(1731.35,1204.50) scale(1.2476,1)" x="-0.75" y="0" font-size="21.75" fill="#ccccdb" stroke="#ccccdb" stroke-width="0.7" stroke-linejoin="round">0</text>
<polygon points="1784.04,1216.50 1787.00,1216.50 1787.00,1233.90 1784.39,1233.90 1784.39,1219.02 1780.04,1222.24 1780.04,1219.11" fill="#ccccdb"/>
<text transform="translate(1789.28,1233.55) scale(0.2461,0.2429)" x="0" y="0" font-size="100.0" fill="#ccccdb" stroke="#ccccdb" stroke-width="2.844" stroke-linejoin="round">7</text>
<text transform="translate(1801.73,1233.90) scale(0.3051,0.2408)" x="0" y="0" font-size="100.0" fill="#ccccdb">:</text>
<text transform="translate(1809.18,1233.56) scale(0.2579,0.2432)" x="0" y="0" font-size="100.0" fill="#ccccdb" stroke="#ccccdb" stroke-width="2.715" stroke-linejoin="round">0</text>
<text transform="translate(1825.36,1233.56) scale(0.2579,0.2432)" x="0" y="0" font-size="100.0" fill="#ccccdb" stroke="#ccccdb" stroke-width="2.715" stroke-linejoin="round">0</text>
<polygon points="1911.93,1216.50 1914.89,1216.50 1914.89,1233.90 1912.28,1233.90 1912.28,1219.02 1907.93,1222.24 1907.93,1219.11" fill="#ccccdb"/>
<text transform="translate(1917.20,1233.55) scale(0.2505,0.2429)" x="0" y="0" font-size="100.0" fill="#ccccdb" stroke="#ccccdb" stroke-width="2.795" stroke-linejoin="round">7</text>
<text transform="translate(1929.86,1233.90) scale(0.3101,0.2408)" x="0" y="0" font-size="100.0" fill="#ccccdb">:</text>
<text transform="translate(1937.51,1233.56) scale(0.2598,0.2432)" x="0" y="0" font-size="100.0" fill="#ccccdb" stroke="#ccccdb" stroke-width="2.694" stroke-linejoin="round">3</text>
<text transform="translate(1953.69,1233.56) scale(0.2624,0.2432)" x="0" y="0" font-size="100.0" fill="#ccccdb" stroke="#ccccdb" stroke-width="2.668" stroke-linejoin="round">0</text>
<polygon points="2039.21,1216.50 2042.17,1216.50 2042.17,1233.90 2039.56,1233.90 2039.56,1219.02 2035.21,1222.24 2035.21,1219.11" fill="#ccccdb"/>
<text transform="translate(2044.64,1233.56) scale(0.2665,0.2432)" x="0" y="0" font-size="100.0" fill="#ccccdb" stroke="#ccccdb" stroke-width="2.627" stroke-linejoin="round">8</text>
<text transform="translate(2058.31,1233.90) scale(0.3145,0.2408)" x="0" y="0" font-size="100.0" fill="#ccccdb">:</text>
<text transform="translate(2065.98,1233.56) scale(0.2663,0.2432)" x="0" y="0" font-size="100.0" fill="#ccccdb" stroke="#ccccdb" stroke-width="2.628" stroke-linejoin="round">0</text>
<text transform="translate(2082.66,1233.56) scale(0.2663,0.2432)" x="0" y="0" font-size="100.0" fill="#ccccdb" stroke="#ccccdb" stroke-width="2.628" stroke-linejoin="round">0</text>
<polygon points="2167.40,1216.50 2170.36,1216.50 2170.36,1233.90 2167.75,1233.90 2167.75,1219.02 2163.40,1222.24 2163.40,1219.11" fill="#ccccdb"/>
<text transform="translate(2172.84,1233.56) scale(0.2674,0.2432)" x="0" y="0" font-size="100.0" fill="#ccccdb" stroke="#ccccdb" stroke-width="2.618" stroke-linejoin="round">8</text>
<text transform="translate(2186.55,1233.90) scale(0.3155,0.2408)" x="0" y="0" font-size="100.0" fill="#ccccdb">:</text>
<text transform="translate(2194.33,1233.56) scale(0.2645,0.2432)" x="0" y="0" font-size="100.0" fill="#ccccdb" stroke="#ccccdb" stroke-width="2.646" stroke-linejoin="round">3</text>
<text transform="translate(2210.78,1233.56) scale(0.2672,0.2432)" x="0" y="0" font-size="100.0" fill="#ccccdb" stroke="#ccccdb" stroke-width="2.620" stroke-linejoin="round">0</text>
<polygon points="2295.61,1216.50 2298.57,1216.50 2298.57,1233.90 2295.96,1233.90 2295.96,1219.02 2291.61,1222.24 2291.61,1219.11" fill="#ccccdb"/>
<text transform="translate(2300.91,1233.56) scale(0.2671,0.2432)" x="0" y="0" font-size="100.0" fill="#ccccdb" stroke="#ccccdb" stroke-width="2.621" stroke-linejoin="round">9</text>
<text transform="translate(2314.54,1233.90) scale(0.3150,0.2408)" x="0" y="0" font-size="100.0" fill="#ccccdb">:</text>
<text transform="translate(2322.23,1233.56) scale(0.2667,0.2432)" x="0" y="0" font-size="100.0" fill="#ccccdb" stroke="#ccccdb" stroke-width="2.624" stroke-linejoin="round">0</text>
<text transform="translate(2338.93,1233.56) scale(0.2667,0.2432)" x="0" y="0" font-size="100.0" fill="#ccccdb" stroke="#ccccdb" stroke-width="2.624" stroke-linejoin="round">0</text>
<polygon points="2423.80,1216.50 2426.76,1216.50 2426.76,1233.90 2424.15,1233.90 2424.15,1219.02 2419.80,1222.24 2419.80,1219.11" fill="#ccccdb"/>
<text transform="translate(2429.11,1233.56) scale(0.2680,0.2432)" x="0" y="0" font-size="100.0" fill="#ccccdb" stroke="#ccccdb" stroke-width="2.612" stroke-linejoin="round">9</text>
<text transform="translate(2442.79,1233.90) scale(0.3160,0.2408)" x="0" y="0" font-size="100.0" fill="#ccccdb">:</text>
<text transform="translate(2450.57,1233.56) scale(0.2650,0.2432)" x="0" y="0" font-size="100.0" fill="#ccccdb" stroke="#ccccdb" stroke-width="2.642" stroke-linejoin="round">3</text>
<text transform="translate(2467.05,1233.56) scale(0.2676,0.2432)" x="0" y="0" font-size="100.0" fill="#ccccdb" stroke="#ccccdb" stroke-width="2.616" stroke-linejoin="round">0</text>
<text transform="translate(2544.12,1233.55) scale(0.2595,0.2430)" x="0" y="0" font-size="100.0" fill="#ccccdb" stroke="#ccccdb" stroke-width="2.698" stroke-linejoin="round">2</text>
<text transform="translate(2560.10,1233.56) scale(0.2631,0.2432)" x="0" y="0" font-size="100.0" fill="#ccccdb" stroke="#ccccdb" stroke-width="2.660" stroke-linejoin="round">0</text>
<text transform="translate(2573.73,1233.90) scale(0.3110,0.2408)" x="0" y="0" font-size="100.0" fill="#ccccdb">:</text>
<text transform="translate(2581.32,1233.56) scale(0.2631,0.2432)" x="0" y="0" font-size="100.0" fill="#ccccdb" stroke="#ccccdb" stroke-width="2.660" stroke-linejoin="round">0</text>
<text transform="translate(2597.80,1233.56) scale(0.2631,0.2432)" x="0" y="0" font-size="100.0" fill="#ccccdb" stroke="#ccccdb" stroke-width="2.660" stroke-linejoin="round">0</text>
<text transform="translate(2672.29,1233.55) scale(0.2603,0.2430)" x="0" y="0" font-size="100.0" fill="#ccccdb" stroke="#ccccdb" stroke-width="2.690" stroke-linejoin="round">2</text>
<text transform="translate(2688.31,1233.56) scale(0.2639,0.2432)" x="0" y="0" font-size="100.0" fill="#ccccdb" stroke="#ccccdb" stroke-width="2.652" stroke-linejoin="round">0</text>
<text transform="translate(2701.98,1233.90) scale(0.3118,0.2408)" x="0" y="0" font-size="100.0" fill="#ccccdb">:</text>
<text transform="translate(2709.67,1233.56) scale(0.2613,0.2432)" x="0" y="0" font-size="100.0" fill="#ccccdb" stroke="#ccccdb" stroke-width="2.679" stroke-linejoin="round">3</text>
<text transform="translate(2725.93,1233.56) scale(0.2639,0.2432)" x="0" y="0" font-size="100.0" fill="#ccccdb" stroke="#ccccdb" stroke-width="2.652" stroke-linejoin="round">0</text>
<text transform="translate(2802.94,1233.55) scale(0.2634,0.2430)" x="0" y="0" font-size="100.0" fill="#ccccdb" stroke="#ccccdb" stroke-width="2.657" stroke-linejoin="round">2</text>
<polygon points="2824.40,1216.50 2827.36,1216.50 2827.36,1233.90 2824.75,1233.90 2824.75,1219.02 2820.40,1222.24 2820.40,1219.11" fill="#ccccdb"/>
<text transform="translate(2827.02,1233.90) scale(0.3154,0.2408)" x="0" y="0" font-size="100.0" fill="#ccccdb">:</text>
<text transform="translate(2834.71,1233.56) scale(0.2671,0.2432)" x="0" y="0" font-size="100.0" fill="#ccccdb" stroke="#ccccdb" stroke-width="2.621" stroke-linejoin="round">0</text>
<text transform="translate(2851.44,1233.56) scale(0.2671,0.2432)" x="0" y="0" font-size="100.0" fill="#ccccdb" stroke="#ccccdb" stroke-width="2.621" stroke-linejoin="round">0</text>
<text transform="translate(2931.11,1233.55) scale(0.2643,0.2430)" x="0" y="0" font-size="100.0" fill="#ccccdb" stroke="#ccccdb" stroke-width="2.649" stroke-linejoin="round">2</text>
<polygon points="2952.65,1216.50 2955.60,1216.50 2955.60,1233.90 2952.99,1233.90 2952.99,1219.02 2948.64,1222.24 2948.64,1219.11" fill="#ccccdb"/>
<text transform="translate(2955.26,1233.90) scale(0.3164,0.2408)" x="0" y="0" font-size="100.0" fill="#ccccdb">:</text>
<text transform="translate(2963.06,1233.56) scale(0.2653,0.2432)" x="0" y="0" font-size="100.0" fill="#ccccdb" stroke="#ccccdb" stroke-width="2.638" stroke-linejoin="round">3</text>
<text transform="translate(2979.56,1233.56) scale(0.2680,0.2432)" x="0" y="0" font-size="100.0" fill="#ccccdb" stroke="#ccccdb" stroke-width="2.612" stroke-linejoin="round">0</text>
<text transform="translate(3057.00,1233.55) scale(0.2610,0.2430)" x="0" y="0" font-size="100.0" fill="#ccccdb" stroke="#ccccdb" stroke-width="2.682" stroke-linejoin="round">2</text>
<text transform="translate(3072.81,1233.55) scale(0.2610,0.2430)" x="0" y="0" font-size="100.0" fill="#ccccdb" stroke="#ccccdb" stroke-width="2.682" stroke-linejoin="round">2</text>
<text transform="translate(3086.00,1233.90) scale(0.3126,0.2408)" x="0" y="0" font-size="100.0" fill="#ccccdb">:</text>
<text transform="translate(3093.63,1233.56) scale(0.2646,0.2432)" x="0" y="0" font-size="100.0" fill="#ccccdb" stroke="#ccccdb" stroke-width="2.645" stroke-linejoin="round">0</text>
<text transform="translate(3110.21,1233.56) scale(0.2646,0.2432)" x="0" y="0" font-size="100.0" fill="#ccccdb" stroke="#ccccdb" stroke-width="2.645" stroke-linejoin="round">0</text>
<text transform="translate(3185.37,1233.55) scale(0.2601,0.2430)" x="0" y="0" font-size="100.0" fill="#ccccdb" stroke="#ccccdb" stroke-width="2.691" stroke-linejoin="round">2</text>
<text transform="translate(3201.13,1233.55) scale(0.2601,0.2430)" x="0" y="0" font-size="100.0" fill="#ccccdb" stroke="#ccccdb" stroke-width="2.691" stroke-linejoin="round">2</text>
<text transform="translate(3214.28,1233.90) scale(0.3117,0.2408)" x="0" y="0" font-size="100.0" fill="#ccccdb">:</text>
<text transform="translate(3221.96,1233.56) scale(0.2611,0.2432)" x="0" y="0" font-size="100.0" fill="#ccccdb" stroke="#ccccdb" stroke-width="2.681" stroke-linejoin="round">3</text>
<text transform="translate(3238.22,1233.56) scale(0.2637,0.2432)" x="0" y="0" font-size="100.0" fill="#ccccdb" stroke="#ccccdb" stroke-width="2.654" stroke-linejoin="round">0</text>
<polyline points="1756.1,1016 1863.3,1016 1865,938.8 1867.1,938.8 1869.3,912.9 2257.8,912.9" fill="none" stroke="#85bd72" stroke-width="2.6" stroke-linejoin="round"/>
<polyline points="1865.5,1170.9 1867.1,1170.9 1869,1145 2257.8,1145" fill="none" stroke="#eccd47" stroke-width="2.6" stroke-linejoin="round"/>
<line x1="3068" y1="912.8" x2="3294" y2="912.8" stroke="#85bd72" stroke-width="2.6"/>
<line x1="3068" y1="1144.8" x2="3294" y2="1144.8" stroke="#eccd47" stroke-width="2.6"/>
<rect x="1714.00" y="1264.00" width="28.00" height="8.20" rx="4.1" fill="#85bd72"/>
<text x="1758.05" y="1276.10" font-size="22.99" letter-spacing="1.581" fill="#ccccdb" stroke="#ccccdb" stroke-width="0.7" stroke-linejoin="round">envoy-default-eg-e41e7b31</text>
<rect x="2098.00" y="1264.00" width="28.00" height="8.20" rx="4.1" fill="#eccd47"/>
<text x="2141.65" y="1276.10" font-size="22.99" letter-spacing="1.815" fill="#ccccdb" stroke="#ccccdb" stroke-width="0.7" stroke-linejoin="round">envoy-default-example-gateway-9b7aba4f</text>
<rect x="33.00" y="1322.60" width="1361.00" height="512.20" rx="4" fill="#181b1f" stroke="#2f3237" stroke-width="2"/>
<rect x="1414.00" y="1322.60" width="1360.00" height="512.20" rx="4" fill="#181b1f" stroke="#2f3237" stroke-width="2"/>
<text x="49.90" y="1365.20" font-size="28.52" letter-spacing="1.075" fill="#ccccdb" stroke="#ccccdb" stroke-width="1.1" stroke-linejoin="round">Success Applied Resources</text>
<circle cx="477.9" cy="1354.8" r="12" fill="none" stroke="#8e8e9b" stroke-width="2.6"/>
<line x1="477.9" y1="1354.5" x2="477.9" y2="1360.0" stroke="#8e8e9b" stroke-width="2.8" stroke-linecap="round"/>
<circle cx="477.9" cy="1350.2" r="1.75" fill="#8e8e9b"/>
<text x="1429.00" y="1365.40" font-size="28.52" letter-spacing="0.921" fill="#ccccdb" stroke="#ccccdb" stroke-width="1.1" stroke-linejoin="round">Fail Applied Resources</text>
<circle cx="1788.5" cy="1354.6" r="12" fill="none" stroke="#8e8e9b" stroke-width="2.6"/>
<line x1="1788.5" y1="1354.3" x2="1788.5" y2="1359.8" stroke="#8e8e9b" stroke-width="2.8" stroke-linecap="round"/>
<circle cx="1788.5" cy="1350.0" r="1.75" fill="#8e8e9b"/>
<path d="M59.00,1834.20 V1675.00 H144.70 V1834.20 Z" fill="#2e3b30"/>
<path d="M320.70,1834.20 V1675.00 H369.50 V1834.20 Z" fill="#2e3b30"/>
<polyline points="35.50,1833.90 59.00,1833.90 59.40,1735.00 60.20,1675.00 144.70,1675.00" fill="none" stroke="#85bd72" stroke-width="1.8"/>
<line x1="320.70" y1="1675.00" x2="369.50" y2="1675.00" stroke="#85bd72" stroke-width="2"/>
<path d="M400.50,1834.20 V1675.00 H486.20 V1834.20 Z" fill="#2e3b30"/>
<path d="M662.20,1834.20 V1675.00 H711.00 V1834.20 Z" fill="#2e3b30"/>
<polyline points="377.00,1833.90 400.50,1833.90 400.90,1735.00 401.70,1675.00 486.20,1675.00" fill="none" stroke="#85bd72" stroke-width="1.8"/>
<line x1="662.20" y1="1675.00" x2="711.00" y2="1675.00" stroke="#85bd72" stroke-width="2"/>
<path d="M742.50,1834.20 V1675.00 H828.20 V1834.20 Z" fill="#2e3b30"/>
<path d="M1004.20,1834.20 V1675.00 H1053.00 V1834.20 Z" fill="#2e3b30"/>
<polyline points="719.00,1833.90 742.50,1833.90 742.90,1735.00 743.70,1675.00 828.20,1675.00" fill="none" stroke="#85bd72" stroke-width="1.8"/>
<line x1="1004.20" y1="1675.00" x2="1053.00" y2="1675.00" stroke="#85bd72" stroke-width="2"/>
<path d="M1083.50,1834.20 V1675.00 H1169.20 V1834.20 Z" fill="#2e3b30"/>
<path d="M1345.20,1834.20 V1675.00 H1394.00 V1834.20 Z" fill="#2e3b30"/>
<polyline points="1060.00,1833.90 1083.50,1833.90 1083.90,1735.00 1084.70,1675.00 1169.20,1675.00" fill="none" stroke="#85bd72" stroke-width="1.8"/>
<line x1="1345.20" y1="1675.00" x2="1394.00" y2="1675.00" stroke="#85bd72" stroke-width="2"/>
<text x="101.95" y="1496.00" font-size="37.51" letter-spacing="2.231" fill="#ccccdb" stroke="#ccccdb" stroke-width="0.9" stroke-linejoin="round">ConfigMap</text>
<polygon points="137.22,1564.90 164.30,1564.90 164.30,1712.90 141.06,1712.90 141.06,1586.36 104.66,1612.11 104.66,1587.40" fill="#85bd72"/>
<text transform="translate(184.32,1711.39) scale(2.1558,2.1102)" x="0" y="0" font-size="100.0" fill="#85bd72" stroke="#85bd72" stroke-width="1.392" stroke-linejoin="round">3</text>
<text x="433.85" y="1496.00" font-size="37.51" letter-spacing="1.844" fill="#ccccdb" stroke="#ccccdb" stroke-width="0.9" stroke-linejoin="round">Deployment</text>
<polygon points="478.72,1564.90 505.80,1564.90 505.80,1712.90 482.56,1712.90 482.56,1586.36 446.16,1612.11 446.16,1587.40" fill="#85bd72"/>
<text transform="translate(525.82,1711.39) scale(2.1558,2.1102)" x="0" y="0" font-size="100.0" fill="#85bd72" stroke="#85bd72" stroke-width="1.392" stroke-linejoin="round">3</text>
<text x="815.70" y="1496.00" font-size="37.51" letter-spacing="1.975" fill="#ccccdb" stroke="#ccccdb" stroke-width="0.9" stroke-linejoin="round">Service</text>
<polygon points="820.72,1564.90 847.80,1564.90 847.80,1712.90 824.56,1712.90 824.56,1586.36 788.16,1612.11 788.16,1587.40" fill="#85bd72"/>
<text transform="translate(867.82,1711.39) scale(2.1558,2.1102)" x="0" y="0" font-size="100.0" fill="#85bd72" stroke="#85bd72" stroke-width="1.392" stroke-linejoin="round">3</text>
<text x="1082.50" y="1496.00" font-size="37.51" letter-spacing="1.915" fill="#ccccdb" stroke="#ccccdb" stroke-width="0.9" stroke-linejoin="round">ServiceAccount</text>
<polygon points="1161.72,1564.90 1188.80,1564.90 1188.80,1712.90 1165.56,1712.90 1165.56,1586.36 1129.16,1612.11 1129.16,1587.40" fill="#85bd72"/>
<text transform="translate(1208.82,1711.39) scale(2.1558,2.1102)" x="0" y="0" font-size="100.0" fill="#85bd72" stroke="#85bd72" stroke-width="1.392" stroke-linejoin="round">3</text>
<text transform="translate(1473.99,1728.10) scale(3.4314,3.4225)" x="0" y="0" font-size="100.0" fill="#85bd72" stroke="#85bd72" stroke-width="2.040" stroke-linejoin="round">N</text>
<text transform="translate(1726.68,1730.29) scale(3.5217,3.3589)" x="0" y="0" font-size="100.0" fill="#85bd72" stroke="#85bd72" stroke-width="1.278" stroke-linejoin="round">o</text>
<text transform="translate(2017.69,1729.67) scale(3.5911,3.2844)" x="0" y="0" font-size="100.0" fill="#85bd72" stroke="#85bd72" stroke-width="1.253" stroke-linejoin="round">d</text>
<text transform="translate(2224.32,1729.61) scale(2.8777,3.3425)" x="0" y="0" font-size="100.0" fill="#85bd72" stroke="#85bd72" stroke-width="1.564" stroke-linejoin="round">a</text>
<text transform="translate(2410.17,1729.09) scale(3.9216,3.4130)" x="0" y="0" font-size="100.0" fill="#85bd72" stroke="#85bd72" stroke-width="1.147" stroke-linejoin="round">t</text>
<text transform="translate(2529.76,1729.61) scale(2.8680,3.3425)" x="0" y="0" font-size="100.0" fill="#85bd72" stroke="#85bd72" stroke-width="1.569" stroke-linejoin="round">a</text>
</svg>
</body></html>
